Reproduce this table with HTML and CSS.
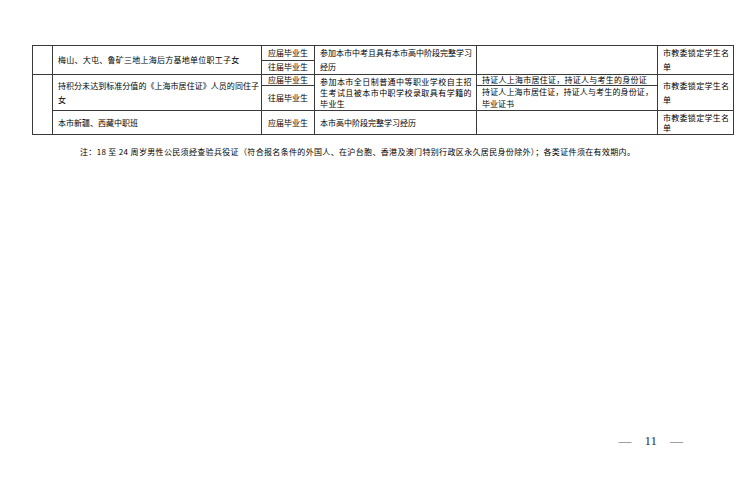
FILE: index.html
```html
<!DOCTYPE html>
<html lang="zh-CN">
<head>
<meta charset="utf-8">
<title>招生报名条件</title>
<link rel="stylesheet" href="styles.css">
</head>
<body>
<div class="page">
  <table class="grid">
    <colgroup>
      <col class="c1"><col class="c2"><col class="c3"><col class="c4"><col class="c5"><col class="c6">
    </colgroup>
    <tbody>
      <tr class="r1a">
        <td rowspan="2"></td>
        <td rowspan="2" class="txt wide">梅山、大屯、鲁矿三地上海后方基地单位职工子女</td>
        <td class="ctr">应届毕业生</td>
        <td rowspan="2" class="txt just lh14">参加本市中考且具有本市高中阶段完整学习经历</td>
        <td rowspan="2"></td>
        <td rowspan="2" class="txt just lh14">市教委锁定学生名单</td>
      </tr>
      <tr class="r1b">
        <td class="ctr">往届毕业生</td>
      </tr>
      <tr class="r2a">
        <td rowspan="3"></td>
        <td rowspan="2" class="txt just lh14 tight">持积分未达到标准分值的《上海市居住证》人员的同住子女</td>
        <td class="ctr">应届毕业生</td>
        <td rowspan="2" class="txt just lh11 spread">参加本市全日制普通中等职业学校自主招生考试且被本市中职学校录取具有学籍的毕业生</td>
        <td class="txt wide">持证人上海市居住证，持证人与考生的身份证</td>
        <td rowspan="2" class="txt just lh14">市教委锁定学生名单</td>
      </tr>
      <tr class="r2b">
        <td class="ctr">往届毕业生</td>
        <td class="txt just lh12">持证人上海市居住证，持证人与考生的身份证，毕业证书</td>
      </tr>
      <tr class="r3">
        <td class="txt">本市新疆、西藏中职班</td>
        <td class="ctr">应届毕业生</td>
        <td class="txt">本市高中阶段完整学习经历</td>
        <td></td>
        <td class="txt just lh10">市教委锁定学生名单</td>
      </tr>
    </tbody>
  </table>
  <p class="note">注：18 至 24 周岁男性公民须经查验兵役证（符合报名条件的外国人、在沪台胞、香港及澳门特别行政区永久居民身份除外）；各类证件须在有效期内。</p>
  <div class="footer">
    <span class="dash">—</span>
    <span class="num">11</span>
    <span class="dash">—</span>
  </div>
</div>
</body>
</html>
```
FILE: styles.css
```css
html, body {
  margin: 0;
  padding: 0;
  background: #ffffff;
}

body {
  width: 750px;
  height: 501px;
  overflow: hidden;
  font-family: "Noto Sans CJK SC", "Noto Sans", sans-serif;
  color: #000;
}

.page {
  padding: 45px 0 0 32px;
}

.grid {
  border-collapse: collapse;
  table-layout: fixed;
  width: 701px;
  font-size: 8px;
  line-height: 10px;
}

.c1 { width: 20px; }
.c2 { width: 209px; }
.c3 { width: 53px; }
.c4 { width: 162px; }
.c5 { width: 181px; }
.c6 { width: 76px; }

.grid td {
  border: 1px solid #3a3a3a;
  padding: 0 4px 0 5px;
  vertical-align: middle;
  overflow: hidden;
}

.grid td.ctr {
  text-align: center;
  padding: 0;
}

.grid td.just {
  text-align: justify;
}

.grid td.tight {
  padding-right: 2px;
}

.grid td.spread {
  letter-spacing: 0.4px;
}

.grid td.wide {
  letter-spacing: 0.25px;
}

.r1a td, .r1b td { height: 13px; }
.r2a td { height: 9px; }
.r2b td { height: 24px; }
.r3 td { height: 23px; }

.lh14 { line-height: 14px; }
.lh12 { line-height: 12px; }
.lh11 { line-height: 11px; }
.lh10 { line-height: 10px; }

.note {
  margin: 12px 0 0 48px;
  font-size: 8px;
  line-height: 10px;
  letter-spacing: 0.34px;
  color: #000;
}

.footer {
  margin-top: 277px;
  display: flex;
  justify-content: flex-end;
  gap: 13px;
  padding-right: 67px;
  font-family: "Liberation Serif", "Times New Roman", serif;
  font-size: 13px;
  line-height: 14px;
  color: #333;
}

.dash {
  color: #555;
}
```
